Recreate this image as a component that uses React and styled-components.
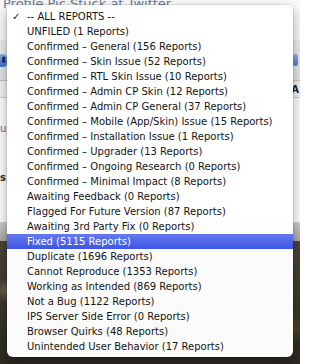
import styled, { createGlobalStyle } from "styled-components";

const reports = [
  { label: "-- ALL REPORTS --", checked: true },
  { label: "UNFILED (1 Reports)" },
  { label: "Confirmed – General (156 Reports)" },
  { label: "Confirmed – Skin Issue (52 Reports)" },
  { label: "Confirmed – RTL Skin Issue (10 Reports)" },
  { label: "Confirmed – Admin CP Skin (12 Reports)" },
  { label: "Confirmed – Admin CP General (37 Reports)" },
  { label: "Confirmed – Mobile (App/Skin) Issue (15 Reports)" },
  { label: "Confirmed – Installation Issue (1 Reports)" },
  { label: "Confirmed – Upgrader (13 Reports)" },
  { label: "Confirmed – Ongoing Research (0 Reports)" },
  { label: "Confirmed – Minimal Impact (8 Reports)" },
  { label: "Awaiting Feedback (0 Reports)" },
  { label: "Flagged For Future Version (87 Reports)" },
  { label: "Awaiting 3rd Party Fix (0 Reports)" },
  { label: "Fixed (5115 Reports)", active: true },
  { label: "Duplicate (1696 Reports)" },
  { label: "Cannot Reproduce (1353 Reports)" },
  { label: "Working as Intended (869 Reports)" },
  { label: "Not a Bug (1122 Reports)" },
  { label: "IPS Server Side Error (0 Reports)" },
  { label: "Browser Quirks (48 Reports)" },
  { label: "Unintended User Behavior (17 Reports)" },
];

export default function App() {
  return (
    <>
      <Global />
      <Page>
        <TitleRow>
          <Title>Profile Pic Stuck at Twitter</Title>
        </TitleRow>
        <FilterBar>
          <SelectEnd>⬍</SelectEnd>
          <BlueButton />
        </FilterBar>
        <HeaderRow>
          <span />
          <ColHead>A</ColHead>
        </HeaderRow>
        <Content>
          <SideLabel $top={24} $color="#5a7096">us</SideLabel>
          <SideLabel $top={36} $color="#2c2c2c" $bold>s</SideLabel>
        </Content>
        <Band />
        <Photo />

        <Menu>
          {reports.map((r) => (
            <Item key={r.label} $active={r.active}>
              <Check>{r.checked ? "✓" : ""}</Check>
              {r.label}
            </Item>
          ))}
        </Menu>
      </Page>
    </>
  );
}

const Global = createGlobalStyle`
  html, body {
    margin: 0;
    padding: 0;
    background: #fff;
    overflow: hidden;
  }
`;

const Page = styled.div`
  position: relative;
  width: 300px;
  height: 364px;
  display: flex;
  flex-direction: column;
  font-family: "DejaVu Sans", "Liberation Sans", sans-serif;
  overflow: hidden;
`;

const TitleRow = styled.div`
  height: 40px;
  flex-shrink: 0;
  background: #fbfbfb;
  padding-left: 3px;
`;

const Title = styled.div`
  margin-top: -3px;
  font-size: 13px;
  line-height: 14px;
  color: #6b7c9c;
  white-space: nowrap;
`;

const FilterBar = styled.div`
  height: 40px;
  flex-shrink: 0;
  display: flex;
  align-items: center;
  justify-content: space-between;
  background: linear-gradient(#eef0f3, #e3e6ea);
`;

const SelectEnd = styled.div`
  width: 7px;
  height: 13px;
  display: flex;
  align-items: center;
  justify-content: center;
  border-radius: 0 4px 4px 0;
  background: linear-gradient(#8fb0e6, #3f72cc);
  color: #0e2142;
  font-size: 9px;
  overflow: hidden;
`;

const BlueButton = styled.div`
  width: 5px;
  height: 12px;
  margin-right: 2px;
  border-radius: 5px;
  background: linear-gradient(#9ab6e8, #4b7bd0);
`;

const HeaderRow = styled.div`
  height: 16px;
  flex-shrink: 0;
  display: flex;
  align-items: center;
  justify-content: space-between;
  padding-right: 1px;
  background: #f3f3f3;
  border-top: 1px solid #c4c4c4;
  border-bottom: 1px solid #cfcfcf;
`;

const ColHead = styled.span`
  font-size: 10px;
  font-weight: bold;
  color: #222;
`;

const Content = styled.div`
  flex: 1;
  display: flex;
  flex-direction: column;
  align-items: flex-start;
  background: #fff;
`;

const SideLabel = styled.div`
  margin-top: ${({ $top }) => $top}px;
  white-space: nowrap;
  font-size: 10px;
  line-height: 13px;
  font-weight: ${({ $bold }) => ($bold ? "bold" : "normal")};
  color: ${({ $color }) => $color};
`;

const Band = styled.div`
  height: 19px;
  flex-shrink: 0;
  background: linear-gradient(#cfcfcf, #a9a9a9);
`;

const Photo = styled.div`
  flex: 1;
  background:
    radial-gradient(circle at 2% 40%, #6a6650 0, transparent 12px),
    radial-gradient(circle at 98% 70%, #5a3e26 0, transparent 14px),
    linear-gradient(#4c4638, #2d2a22);
`;

const Menu = styled.div`
  position: absolute;
  top: 5px;
  left: 7px;
  width: 286px;
  padding: 4px 0 3px;
  background: rgba(255, 255, 255, 0.98);
  border-radius: 4px 4px 6px 6px;
  box-shadow: 0 0 0 1px rgba(0, 0, 0, 0.08), 0 5px 14px rgba(0, 0, 0, 0.35);
`;

const Item = styled.div`
  display: flex;
  align-items: center;
  height: 15px;
  font-size: 10px;
  line-height: 15px;
  white-space: nowrap;
  color: ${({ $active }) => ($active ? "#fff" : "#141414")};
  background: ${({ $active }) =>
    $active ? "linear-gradient(#6479f0, #3d55e4)" : "transparent"};
`;

const Check = styled.span`
  width: 20px;
  padding-left: 5px;
  box-sizing: border-box;
  font-size: 10px;
  font-weight: bold;
  flex-shrink: 0;
`;
